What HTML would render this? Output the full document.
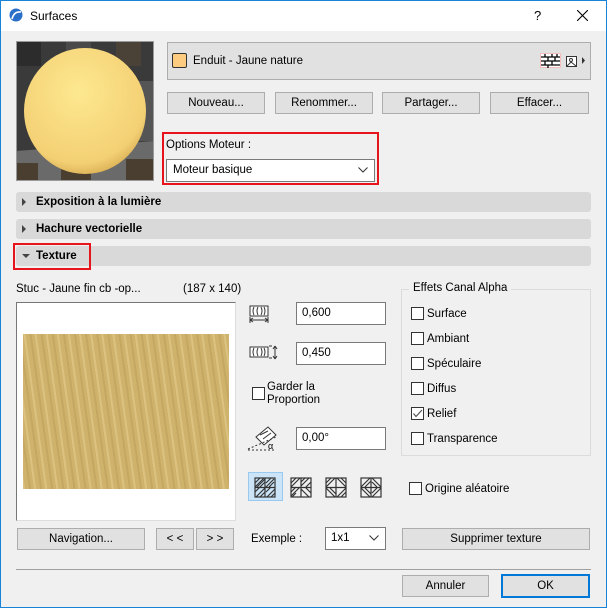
<!DOCTYPE html>
<html><head><meta charset="utf-8"><style>
*{box-sizing:border-box;margin:0;padding:0}
body{width:607px;height:608px;background:#f0f0f0;font-family:"Liberation Sans",sans-serif;font-size:11.5px;color:#000;position:relative;overflow:hidden}
.a{position:absolute}
.btn{position:absolute;background:#e1e1e1;border:1px solid #adadad;text-align:center;font-size:11.5px;line-height:21px}
.hdr{position:absolute;left:16px;width:575px;height:20px;background:#d9d9d9;border-radius:3px;font-weight:bold;line-height:20px;padding-left:20px}
.tri{position:absolute;left:6px;top:6px;width:0;height:0;border-left:4px solid #444;border-top:4px solid transparent;border-bottom:4px solid transparent}
.inp{position:absolute;background:#fff;border:1px solid #7a7a7a;padding-left:5px;line-height:21px}
.cb{position:absolute;width:13px;height:13px;background:#fff;border:1px solid #333}
.lbl{position:absolute;line-height:14px}
</style></head><body>
<div class="a" style="left:0;top:0;width:607px;height:608px;border:1px solid #1883d7"></div>
<div class="a" style="left:1px;top:1px;width:605px;height:30px;background:#fff"></div>
<svg class="a" style="left:9px;top:8px" width="14" height="14"><circle cx="7" cy="7" r="6.5" fill="#2a6fc9"/><path d="M3 11 Q5 3 12 4" stroke="#fff" stroke-width="1.6" fill="none"/></svg>
<div class="a" style="left:30px;top:9px;font-size:12px">Surfaces</div>
<div class="a" style="left:534px;top:8px;font-size:13px">?</div>
<svg class="a" style="left:577px;top:10px" width="11" height="11"><path d="M0 0L11 11M11 0L0 11" stroke="#000" stroke-width="1.1"/></svg>

<svg class="a" style="left:16px;top:41px" width="138" height="140">
<rect width="138" height="140" fill="#3a3a3a"/>
<rect x="0" y="0" width="25" height="25" fill="#2c2c2c"/><rect x="50" y="0" width="25" height="25" fill="#4a4a4a"/><rect x="100" y="0" width="25" height="25" fill="#4a4236"/>
<rect x="112" y="40" width="26" height="60" fill="#555"/>
<path d="M0 110 L138 100 L138 140 L0 140Z" fill="#6a6a6a"/>
<rect x="0" y="122" width="22" height="18" fill="#4a3e30"/><rect x="45" y="122" width="30" height="18" fill="#4a3e30"/><rect x="110" y="118" width="28" height="22" fill="#4a3e30"/>
<defs><radialGradient id="g" cx="0.45" cy="0.35" r="0.75"><stop offset="0" stop-color="#fde890"/><stop offset="0.75" stop-color="#f4d074"/><stop offset="1" stop-color="#c89a40"/></radialGradient></defs>
<ellipse cx="69" cy="70" rx="61" ry="63" fill="url(#g)"/>
<rect x="0.5" y="0.5" width="137" height="139" fill="none" stroke="#999"/>
</svg>

<div class="a" style="left:167px;top:42px;width:424px;height:38px;background:#e1e1e1;border:1px solid #adadad"></div>
<div class="a" style="left:172px;top:53px;width:15px;height:15px;background:#fdcc80;border:1px solid #333;border-radius:2px"></div>
<div class="a" style="left:193px;top:55px">Enduit - Jaune nature</div>
<svg class="a" style="left:540px;top:53px" width="48" height="16">
<rect x="0.5" y="0.5" width="20" height="14" fill="#fff" stroke="#f4bcbc"/>
<path d="M1 4H20M1 8H20M1 12H20M5 1V4M12 1V4M17 1V4M8 4V8M15 4V8M5 8V12M12 8V12M8 12V15" stroke="#000" stroke-width="1.3"/>
<rect x="26.5" y="3.5" width="10" height="10" fill="#fff" stroke="#333"/><circle cx="31" cy="7" r="1.5" fill="none" stroke="#333"/><path d="M27 13L31 9L36 13" stroke="#333" fill="none"/>
<path d="M42 4L45 7.5L42 11Z" fill="#333"/></svg>

<div class="btn" style="left:167px;top:92px;width:98px;height:22px">Nouveau...</div>
<div class="btn" style="left:275px;top:92px;width:98px;height:22px">Renommer...</div>
<div class="btn" style="left:382px;top:92px;width:98px;height:22px">Partager...</div>
<div class="btn" style="left:490px;top:92px;width:99px;height:22px">Effacer...</div>

<div class="a" style="left:162px;top:132px;width:217px;height:53px;border:2px solid #e8141b"></div>
<div class="a" style="left:166px;top:139px">Options Moteur :</div>
<div class="inp" style="left:166px;top:159px;width:209px;height:23px;padding-left:6px">Moteur basique</div>
<svg class="a" style="left:358px;top:167px" width="10" height="6"><path d="M0.5 0.5L5 5L9.5 0.5" stroke="#333" fill="none"/></svg>

<div class="hdr" style="top:192px"><div class="tri"></div>Exposition à la lumière</div>
<div class="hdr" style="top:219px"><div class="tri"></div>Hachure vectorielle</div>
<div class="hdr" style="top:246px"><div class="a" style="left:6px;top:8px;border-top:4px solid #444;border-left:4px solid transparent;border-right:4px solid transparent"></div>Texture</div>
<div class="a" style="left:13px;top:243px;width:78px;height:27px;border:2px solid #e8141b"></div>

<div class="a" style="left:16px;top:283px">Stuc - Jaune fin cb -op...</div>
<div class="a" style="left:183px;top:283px">(187 x 140)</div>

<div class="a" style="left:16px;top:302px;width:220px;height:219px;background:#fff;border-left:1px solid #777;border-top:1px solid #777;border-right:1px solid #ddd;border-bottom:1px solid #ddd"></div>
<div class="a" style="left:23px;top:334px;width:206px;height:155px;background:#cfb36c;background-image:repeating-linear-gradient(82deg,rgba(255,240,190,0.25) 0 2px,rgba(0,0,0,0) 2px 6px,rgba(120,90,30,0.12) 6px 8px,rgba(0,0,0,0) 8px 11px)"></div>

<svg class="a" style="left:249px;top:305px" width="24" height="24"><rect x="1" y="1" width="18" height="10" fill="#fff" stroke="#333"/><path d="M5 2Q3 6 5 10M9 2Q7 6 9 10M12 2Q14 6 12 10M15 2Q17 6 15 10" stroke="#333" fill="none"/><path d="M1 15H19M1 12V18M19 12V18M1 15l3-2M1 15l3 2M19 15l-3-2M19 15l-3 2" stroke="#333" fill="none"/></svg>
<div class="inp" style="left:296px;top:302px;width:90px;height:23px">0,600</div>
<svg class="a" style="left:249px;top:345px" width="30" height="16"><rect x="1" y="2" width="18" height="10" fill="#fff" stroke="#333"/><path d="M5 3Q3 7 5 11M9 3Q7 7 9 11M12 3Q14 7 12 11M15 3Q17 7 15 11" stroke="#333" fill="none"/><path d="M20 1H23M20 13H23M26 1V14M26 1l-2 3M26 1l2 3M26 14l-2-3M26 14l2-3" stroke="#333" fill="none"/></svg>
<div class="inp" style="left:296px;top:342px;width:90px;height:23px">0,450</div>
<div class="cb" style="left:252px;top:387px"></div>
<div class="lbl" style="left:267px;top:381px;line-height:13px">Garder la<br>Proportion</div>
<svg class="a" style="left:246px;top:423px" width="34" height="28"><path d="M10 14L22 4L30 12L18 22Z" fill="#fff" stroke="#333"/><path d="M14 12L22 8M17 16L25 10" stroke="#333"/><path d="M2 27H30" stroke="#333" stroke-dasharray="2 2"/><path d="M2 26L30 14" stroke="#333" stroke-dasharray="2 2"/><text x="22" y="26" font-size="9" font-family="Liberation Sans">α</text></svg>
<div class="inp" style="left:296px;top:427px;width:90px;height:23px">0,00°</div>

<div class="a" style="left:248px;top:472px;width:35px;height:29px;background:#cce4f7;border:1px solid #99c9ef"></div>
<svg class="a" style="left:254px;top:477px" width="135" height="21">
<g stroke="#333" fill="none" stroke-width="1.2">
<rect x="1" y="1" width="20" height="19"/><path d="M11 1V20M1 10.5H21M1 6L6 1M1 10L10 1M3 10L11 2M6 10L11 5M12 6L17 1M12 10L20 2M15 10L20 5M1 15L6 10M2 20L11 11M6 20L11 15M12 15L17 10M13 20L21 12M17 20L21 16"/>
<rect x="37" y="1" width="20" height="19"/><path d="M47 1V20M37 10.5H57M37 6L42 1M37 10L46 1M47 5L51 1M47 9L55 1M52 10L57 5M37 15L42 10M37 19L46 10M47 12L55 20M51 10L57 16M38 20L42 16"/>
<rect x="72" y="1" width="20" height="19"/><path d="M82 1V20M72 10.5H92M72 6L77 1M72 10L81 1M83 1L92 10M87 1L92 6M72 11L81 20M76 11L82 17M83 20L92 11M87 20L92 15"/>
<rect x="107" y="1" width="20" height="19"/><path d="M117 1V20M107 10.5H127M107 10L116 1M111 10L117 4M118 1L127 10M118 5L123 10M107 11L116 20M111 11L117 17M118 20L127 11M118 16L123 11"/>
</g></svg>

<div class="a" style="left:401px;top:289px;width:190px;height:167px;border:1px solid #dcdcdc"></div>
<div class="a" style="left:409px;top:282px;background:#f0f0f0;padding:0 4px">Effets Canal Alpha</div>
<div class="cb" style="left:411px;top:307px"></div><div class="lbl" style="left:427px;top:307px">Surface</div>
<div class="cb" style="left:411px;top:332px"></div><div class="lbl" style="left:427px;top:332px">Ambiant</div>
<div class="cb" style="left:411px;top:357px"></div><div class="lbl" style="left:427px;top:357px">Spéculaire</div>
<div class="cb" style="left:411px;top:382px"></div><div class="lbl" style="left:427px;top:382px">Diffus</div>
<div class="cb" style="left:411px;top:407px"></div><svg class="a" style="left:412px;top:408px" width="11" height="11"><path d="M1.5 5.5L4 8.5L10 2" stroke="#555" stroke-width="1.2" fill="none"/></svg><div class="lbl" style="left:427px;top:407px">Relief</div>
<div class="cb" style="left:411px;top:432px"></div><div class="lbl" style="left:427px;top:432px">Transparence</div>
<div class="cb" style="left:409px;top:482px"></div><div class="lbl" style="left:425px;top:482px">Origine aléatoire</div>

<div class="btn" style="left:17px;top:528px;width:128px;height:22px">Navigation...</div>
<div class="btn" style="left:156px;top:528px;width:38px;height:22px">&lt; &lt;</div>
<div class="btn" style="left:196px;top:528px;width:38px;height:22px">&gt; &gt;</div>
<div class="a" style="left:251px;top:533px">Exemple :</div>
<div class="inp" style="left:325px;top:527px;width:61px;height:23px">1x1</div>
<svg class="a" style="left:369px;top:535px" width="10" height="6"><path d="M0.5 0.5L5 5L9.5 0.5" stroke="#333" fill="none"/></svg>
<div class="btn" style="left:402px;top:528px;width:188px;height:22px">Supprimer texture</div>

<div class="a" style="left:16px;top:569px;width:575px;height:1px;background:#a0a0a0"></div>
<div class="btn" style="left:402px;top:575px;width:87px;height:22px">Annuler</div>
<div class="btn" style="left:501px;top:574px;width:89px;height:24px;border:2px solid #0078d7;line-height:20px">OK</div>
</body></html>
